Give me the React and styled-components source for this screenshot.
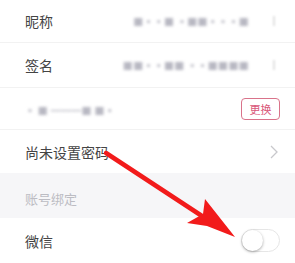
import React from 'react'
import styled, { createGlobalStyle } from 'styled-components'

const GlobalStyle = createGlobalStyle`
  html, body {
    margin: 0;
    padding: 0;
    background: #fff;
  }
  body {
    font-family: "Noto Sans CJK SC", "Noto Sans", sans-serif;
  }
`

const Page = styled.div`
  position: relative;
  width: 295px;
  height: 263px;
  overflow: hidden;
  background: #fff;
`

const Row = styled.div`
  display: flex;
  align-items: center;
  height: ${p => p.h}px;
  padding: 0 ${p => p.pr || 15}px 0 25px;
  box-sizing: border-box;
  border-bottom: ${p => (p.line ? '1px solid #f2f2f2' : 'none')};
`

const Label = styled.span`
  flex: 1;
  font-size: 14px;
  color: #444;
  white-space: nowrap;
`

const Blurred = styled.span`
  font-size: 10px;
  color: #b8b8c2;
  filter: blur(1.8px);
  letter-spacing: 0.3px;
  white-space: nowrap;
  margin-right: ${p => p.mr || 0}px;
`

const FaintChevron = styled.span`
  width: 4px;
  height: 10px;
  border-right: 2px solid #e2e2e2;
  filter: blur(1px);
`

const Chevron = styled.svg`
  width: 8px;
  height: 14px;
  margin-right: 2px;
`

const SwapButton = styled.button`
  width: 39px;
  height: 22px;
  padding: 0;
  border: 1px solid #d9738a;
  border-radius: 4px;
  background: #fff;
  color: #d9577a;
  font-family: inherit;
  font-size: 11px;
  line-height: 20px;
`

const SectionHeader = styled.div`
  height: 45px;
  display: flex;
  align-items: center;
  padding: 6px 25px 0;
  box-sizing: border-box;
  background: #f6f6f8;
  font-size: 13px;
  color: #bcbcc3;
`

const Toggle = styled.div`
  width: 39px;
  height: 23px;
  border-radius: 12px;
  border: 1px solid #e6e6e6;
  box-sizing: border-box;
  background: #fff;
  position: relative;
`

const Knob = styled.div`
  position: absolute;
  left: 0;
  top: 0;
  width: 21px;
  height: 21px;
  border-radius: 50%;
  background: #fff;
  box-shadow: 0 1px 3px rgba(0, 0, 0, 0.35);
`

const ArrowLayer = styled.svg`
  position: absolute;
  left: 0;
  top: 0;
  pointer-events: none;
`

export default function App() {
  return (
    <>
      <GlobalStyle />
      <Page>
        <Row h={43} pr={20} line>
          <Label>昵称</Label>
          <Blurred mr={20}>■▪▪■ ▪■■▪▪▪■</Blurred>
          <FaintChevron />
        </Row>
        <Row h={45} pr={20} line>
          <Label>签名</Label>
          <Blurred mr={20}>■■▪▪■■ ▪▪■■■■</Blurred>
          <FaintChevron />
        </Row>
        <Row h={42} line>
          <Label>
            <Blurred>▪ ■ ━━━■ ■▪</Blurred>
          </Label>
          <SwapButton>更换</SwapButton>
        </Row>
        <Row h={43}>
          <Label>尚未设置密码</Label>
          <Chevron viewBox="0 0 8 14">
            <path d="M1 1 L7 7 L1 13" fill="none" stroke="#c8c8cc" strokeWidth="1.3" />
          </Chevron>
        </Row>
        <SectionHeader>账号绑定</SectionHeader>
        <Row h={45}>
          <Label>微信</Label>
          <Toggle>
            <Knob />
          </Toggle>
        </Row>
        <ArrowLayer width="295" height="263" viewBox="0 0 295 263">
          <line x1="106" y1="153" x2="205" y2="218" stroke="#f21b1b" strokeWidth="4.5" strokeLinecap="round" />
          <polygon points="235,237 205,199 203,214 187,223 207,226" fill="#f21b1b" />
        </ArrowLayer>
      </Page>
    </>
  )
}
